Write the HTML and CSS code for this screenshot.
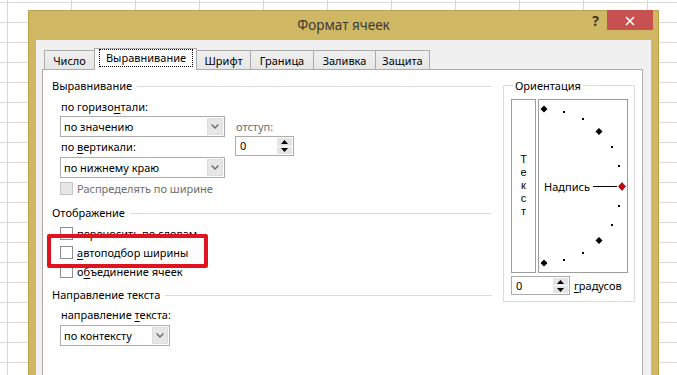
FILE: index.html
```html
<!DOCTYPE html>
<html lang="ru">
<head>
<meta charset="utf-8">
<title>Формат ячеек</title>
<link rel="stylesheet" href="styles.css">
</head>
<body>
<div class="dialog">
  <div class="titlebar">
    <div class="title">Формат ячеек</div>
    <div class="controls">
      <div class="help">?</div>
      <div class="close"><svg width="10" height="10" viewBox="0 0 10 10"><path d="M1 1L9 9M9 1L1 9" stroke="#fff" stroke-width="1.6" fill="none"/></svg></div>
    </div>
  </div>
  <div class="client">
    <div class="tabs">
      <div class="tab t1">Число</div>
      <div class="tab t2 active"><span class="focus">Выравнивание</span></div>
      <div class="tab t3">Шрифт</div>
      <div class="tab t4">Граница</div>
      <div class="tab t5">Заливка</div>
      <div class="tab t6">Защита</div>
    </div>
    <div class="panel">
      <div class="left">
        <div class="ghead"><span>Выравнивание</span><i></i></div>
        <div class="align-row">
          <div class="align-main">
            <div class="lbl">по горизо<u>н</u>тали:</div>
            <div class="select wide"><span>по значению</span><b class="drop"><svg width="8" height="5" viewBox="0 0 8 5"><path d="M0.6 0.6L4 4L7.4 0.6" fill="none" stroke="#6a6a6a" stroke-width="1.4"/></svg></b></div>
            <div class="lbl gap2">по <u>в</u>ертикали:</div>
            <div class="select wide gap2"><span>по нижнему краю</span><b class="drop"><svg width="8" height="5" viewBox="0 0 8 5"><path d="M0.6 0.6L4 4L7.4 0.6" fill="none" stroke="#6a6a6a" stroke-width="1.4"/></svg></b></div>
          </div>
          <div class="indent">
            <div class="lbl dis">отступ:</div>
            <div class="spin"><span>0</span><b class="spinbtn"><i><svg width="7" height="4" viewBox="0 0 7 4"><path d="M3.5 0L7 4H0Z" fill="#000"/></svg></i><i><svg width="7" height="4" viewBox="0 0 7 4"><path d="M0 0H7L3.5 4Z" fill="#000"/></svg></i></b></div>
          </div>
        </div>
        <div class="check disabled"><span class="box"></span>Распределять по ширине</div>

        <div class="ghead g2"><span>Отображение</span><i></i></div>
        <div class="checks">
          <div class="check"><span class="box"></span>переносить по словам</div>
          <div class="check"><span class="box"></span><u>а</u>втоподбор ширины</div>
          <div class="check"><span class="box"></span>о<u>б</u>ъединение ячеек</div>
          <div class="redbox"></div>
        </div>

        <div class="ghead g3"><span>Направление текста</span><i></i></div>
        <div class="lbl g4">направление <u>т</u>екста:</div>
        <div class="select narrow gap2"><span>по контексту</span><b class="drop"><svg width="8" height="5" viewBox="0 0 8 5"><path d="M0.6 0.6L4 4L7.4 0.6" fill="none" stroke="#6a6a6a" stroke-width="1.4"/></svg></b></div>
      </div>

      <div class="orient">
        <div class="olabel">Ориентация</div>
        <div class="oboxes">
          <div class="vtext"><span>Т</span><span>е</span><span>к</span><span>с</span><span>т</span></div>
          <div class="dial">
            <svg width="88" height="172" viewBox="0 0 88 172">
              <g fill="#000">
                <polygon points="5,5.5 8.5,9 5,12.5 1.5,9"/>
                <rect x="24" y="11" width="2" height="2"/>
                <rect x="43" y="18" width="2" height="2"/>
                <polygon points="60,28 63.5,31.5 60,35 56.5,31.5"/>
                <rect x="72" y="46" width="2" height="2"/>
                <rect x="79" y="65" width="2" height="2"/>
                <rect x="79" y="105" width="2" height="2"/>
                <rect x="72" y="124" width="2" height="2"/>
                <polygon points="60,137 63.5,140.5 60,144 56.5,140.5"/>
                <rect x="43" y="152" width="2" height="2"/>
                <rect x="24" y="159" width="2" height="2"/>
                <polygon points="5,159.5 8.5,163 5,166.5 1.5,163"/>
              </g>
              <line x1="54" y1="86.5" x2="78" y2="86.5" stroke="#000" stroke-width="1"/>
              <polygon points="83,82.5 86.5,86.5 83,90.5 79.5,86.5" fill="#c8000a" stroke="#3a0000" stroke-width="0.6"/>
              <text x="5" y="90.5" class="dialtext">Надпись</text>
            </svg>
          </div>
        </div>
        <div class="orow">
          <div class="spin small"><span>0</span><b class="spinbtn"><i><svg width="7" height="4" viewBox="0 0 7 4"><path d="M3.5 0L7 4H0Z" fill="#000"/></svg></i><i><svg width="7" height="4" viewBox="0 0 7 4"><path d="M0 0H7L3.5 4Z" fill="#000"/></svg></i></b></div>
          <div class="deg"><u>г</u>радусов</div>
        </div>
      </div>
    </div>
  </div>
</div>
</body>
</html>
```
FILE: styles.css
```css
* { box-sizing: border-box; }
html, body { margin: 0; padding: 0; }
body {
  width: 677px;
  height: 375px;
  overflow: hidden;
  background-color: #fff;
  background-image:
    linear-gradient(to right, #d8d8d8 1px, transparent 1px),
    linear-gradient(to bottom, #d8d8d8 1px, transparent 1px);
  background-size: 64px 20px;
  background-position: 7px 2px;
  font-family: "Noto Sans", "Open Sans", sans-serif;
  font-size: 11px;
  color: #000;
}
u { text-decoration: underline; text-underline-offset: 2px; }

.dialog {
  margin: 10px 0 0 28px;
  width: 631px;
  height: 380px;
  background: #cfb763;
  border: 1px solid #bca24f;
  display: flex;
  flex-direction: column;
}
.titlebar {
  height: 29px;
  flex: none;
  display: grid;
  grid-template-columns: 1fr auto 1fr;
  align-items: start;
}
.title {
  grid-column: 2;
  font-size: 13.5px;
  line-height: 29px;
  color: #3a3a3a;
}
.controls {
  grid-column: 3;
  justify-self: end;
  display: flex;
  margin-top: -1px;
  margin-right: 5px;
}
.help {
  font-size: 14px;
  font-weight: bold;
  color: #383838;
  line-height: 22px;
  margin-right: 8px;
}
.close {
  width: 46px;
  height: 20px;
  background: #c75050;
  display: flex;
  align-items: center;
  justify-content: center;
  padding-top: 2px;
}

.client {
  flex: 1;
  margin: 0 7px;
  background: #f0f0f0;
  padding-top: 8px;
  display: flex;
  flex-direction: column;
}
.tabs {
  display: flex;
  align-items: flex-end;
  padding-left: 8px;
  height: 21px;
  position: relative;
  z-index: 1;
}
.tab {
  height: 19px;
  border: 1px solid #acacac;
  border-bottom: none;
  background: linear-gradient(#f0f0f0, #e6e6e6);
  margin-left: -1px;
  display: flex;
  align-items: center;
  justify-content: center;
  line-height: 16px;
  padding-top: 1px;
}
.t1 { width: 51px; margin-left: 0; }
.t2 { width: 103px; }
.t3 { width: 55px; }
.t4 { width: 64px; }
.t5 { width: 63px; }
.t6 { width: 55px; }
.tab.active {
  height: 22px;
  margin-bottom: -1px;
  background: #fff;
  position: relative;
  z-index: 2;
  align-items: flex-start;
  padding-top: 0;
}
.focus {
  display: block;
  width: 94px;
  margin-left: 1px;
  height: 18px;
  border: 1px dotted #000;
  text-align: center;
  line-height: 15px;
}

.panel {
  flex: 1;
  margin: 0 8px 0 6px;
  background: #fff;
  border: 1px solid #acacac;
  display: flex;
  align-items: flex-start;
  gap: 11px;
  padding: 8px 7px 0 9px;
}
.left { width: 440px; flex: none; }
.ghead {
  display: flex;
  align-items: center;
  height: 16px;
  line-height: 16px;
}
.ghead i {
  flex: 1;
  height: 1px;
  background: #dcdcdc;
  margin-left: 5px;
}
.g2 { margin-top: 8px; }
.g3 { margin-top: 6px; }
.lbl {
  line-height: 16px;
  height: 16px;
  padding-left: 9px;
  margin-top: 5px;
  white-space: nowrap;
}
.g4 { margin-top: 4px; }
.dis, .disabled { color: #6d6d6d; }
.align-row { display: flex; }
.gap2 { margin-top: 2px; }

.select {
  display: flex;
  align-items: stretch;
  height: 21px;
  border: 1px solid #acacac;
  background: #fff;
  margin-left: 8px;
  margin-top: 1px;
}
.select.gap2 { margin-top: 2px; }
.select.wide { width: 165px; }
.select.narrow { width: 110px; }
.select span {
  flex: 1;
  padding-left: 3px;
  line-height: 19px;
  white-space: nowrap;
}
.drop {
  width: 16px;
  margin: 1px;
  background: #e6e6e6;
  border: 1px solid #dedede;
  display: flex;
  align-items: center;
  justify-content: center;
}

.indent { margin-left: 10px; }
.indent .lbl { padding-left: 1px; margin-top: 25px; }
.spin {
  width: 59px;
  height: 20px;
  margin-top: 1px;
  border: 1px solid #acacac;
  background: #fff;
  display: flex;
  align-items: stretch;
}
.spin span {
  flex: 1;
  padding-left: 4px;
  line-height: 18px;
}
.spinbtn {
  width: 15px;
  margin: 1px;
  display: flex;
  flex-direction: column;
  gap: 1px;
}
.spinbtn i {
  flex: 1;
  background: #e4e4e4;
  display: flex;
  align-items: center;
  justify-content: center;
}

.check {
  display: flex;
  align-items: center;
  height: 19px;
  padding-left: 8px;
  white-space: nowrap;
}
.check .box {
  width: 13px;
  height: 13px;
  border: 1px solid #8f8f8f;
  background: #fff;
  margin-right: 4px;
  flex: none;
}
.check.disabled { margin-top: 1px; height: 18px; }
.check.disabled .box { background: #e6e6e6; border-color: #c4c4c4; }
.checks { position: relative; margin-top: 3px; }
.redbox {
  position: absolute;
  left: -5px;
  top: 10px;
  width: 161px;
  height: 34px;
  border: 4px solid #e0141e;
  border-radius: 2px;
}

.orient {
  width: 132px;
  flex: none;
  margin-top: 7px;
  border: 1px solid #dcdcdc;
  padding: 0 0 6px 7px;
  display: flex;
  flex-direction: column;
}
.olabel {
  align-self: flex-start;
  margin: -8px 0 0 2px;
  padding: 0 2px;
  background: #fff;
  line-height: 16px;
}
.oboxes {
  display: flex;
  gap: 2px;
  margin-top: 5px;
}
.vtext {
  width: 25px;
  height: 174px;
  border: 1px solid #9c9c9c;
  display: flex;
  flex-direction: column;
  align-items: center;
  justify-content: center;
  padding-bottom: 2px;
  font-family: "Liberation Sans", Arial, sans-serif;
  font-size: 11px;
}
.vtext span {
  display: block;
  height: 13px;
  line-height: 13px;
}
.dial {
  width: 90px;
  height: 174px;
  border: 1px solid #9c9c9c;
}
.dial svg { display: block; }
.dialtext {
  font-family: "Noto Sans", "Open Sans", sans-serif;
  font-size: 11px;
  fill: #000;
}
.orow {
  display: flex;
  align-items: center;
  margin-top: 3px;
}
.spin.small { height: 19px; margin-top: 0; }
.spin.small span { line-height: 17px; }
.deg { margin-left: 4px; line-height: 16px; }
```
